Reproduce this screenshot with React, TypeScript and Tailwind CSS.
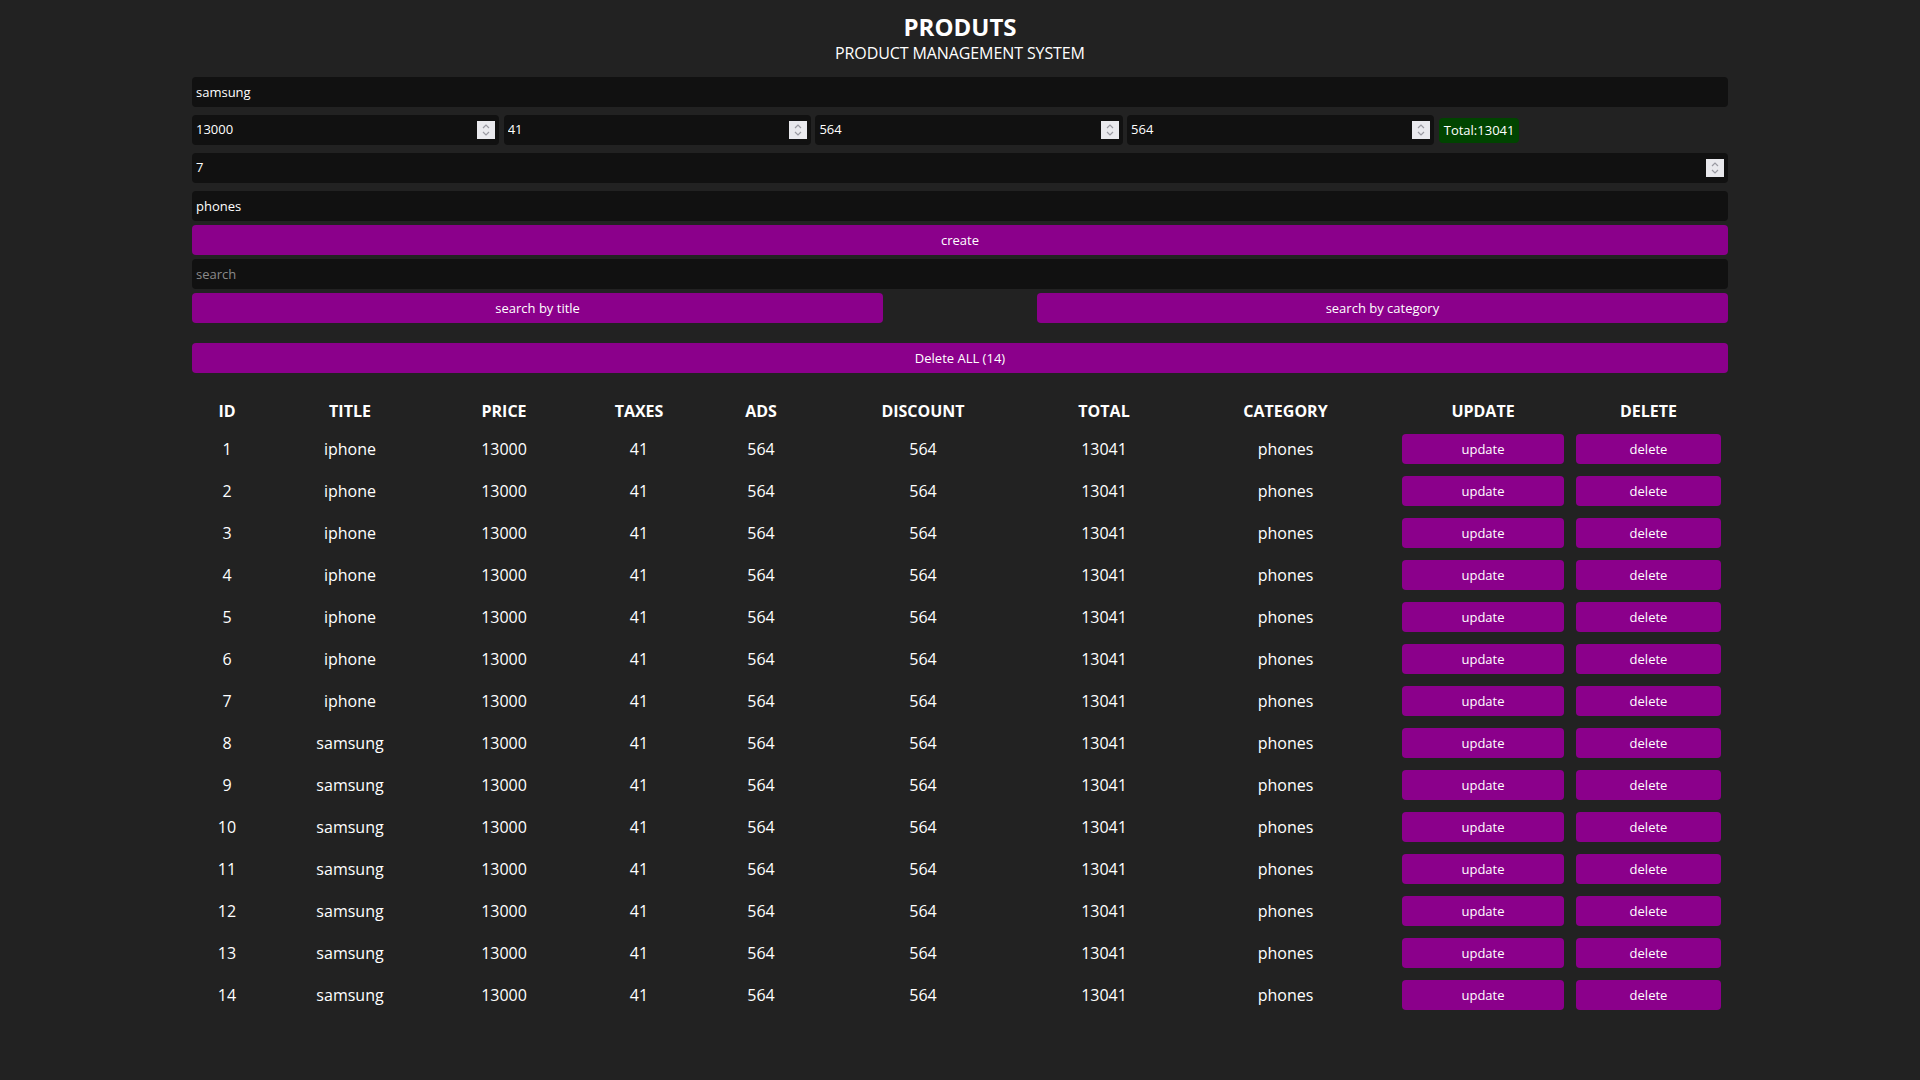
import React from 'react';

const font = "font-['Open_Sans','Noto_Sans',sans-serif]";

interface Product {
  id: number;
  title: string;
  price: number;
  taxes: number;
  ads: number;
  discount: number;
  total: number;
  category: string;
}

const products: Product[] = Array.from({ length: 14 }, (_, i) => ({
  id: i + 1,
  title: i < 7 ? 'iphone' : 'samsung',
  price: 13000,
  taxes: 41,
  ads: 564,
  discount: 564,
  total: 13041,
  category: 'phones',
}));

const columns = [
  { label: 'id', w: 'w-[66px]' },
  { label: 'title', w: 'w-[176px]' },
  { label: 'price', w: 'w-[128px]' },
  { label: 'taxes', w: 'w-[138px]' },
  { label: 'ads', w: 'w-[102px]' },
  { label: 'discount', w: 'w-[218px]' },
  { label: 'total', w: 'w-[140px]' },
  { label: 'category', w: 'w-[219px]' },
  { label: 'update', w: 'w-[172px]' },
  { label: 'delete', w: 'w-[155px]' },
];

const Spinner = () => (
  <div className="w-[18px] h-[18px] bg-[#e9e9ed] flex items-center justify-center shrink-0">
    <svg width="10" height="14" viewBox="0 0 10 14" fill="none" stroke="#9a9aa2" strokeWidth="1.2">
      <path d="M2 5 L5 2 L8 5" />
      <path d="M2 9 L5 12 L8 9" />
    </svg>
  </div>
);

const NumberField: React.FC<{ value: string; className?: string }> = ({ value, className }) => (
  <div className={`h-[30px] bg-[#111] rounded-[4px] flex items-center pl-[4px] pr-[4px] ${className ?? ''}`}>
    <input
      type="text"
      defaultValue={value}
      className="flex-1 min-w-0 bg-transparent outline-none text-white text-[13px]"
    />
    <Spinner />
  </div>
);

const TextField: React.FC<{ value?: string; placeholder?: string; className?: string }> = ({ value, placeholder, className }) => (
  <input
    type="text"
    defaultValue={value}
    placeholder={placeholder}
    className={`block w-full h-[30px] bg-[#111] rounded-[4px] px-[4px] outline-none text-white text-[13px] placeholder:text-[#8a8a8a] ${className ?? ''}`}
  />
);

const PurpleButton: React.FC<{ children: React.ReactNode; className?: string }> = ({ children, className }) => (
  <button className={`h-[30px] bg-[#8b008b] text-white text-[13px] leading-[30px] rounded-[4px] cursor-pointer ${className ?? ''}`}>
    {children}
  </button>
);

export default function App() {
  return (
    <div className={`min-h-screen bg-[#222] text-white ${font}`}>
      <div className="w-[80%] mx-auto pb-[40px]">
        <div className="text-center pt-[12px]">
          <h2 className="text-[24px] leading-[30px] font-bold">PRODUTS</h2>
          <p className="text-[16px] leading-[22px] tracking-[-0.1px]">PRODUCT MANAGEMENT SYSTEM</p>
        </div>

        <div className="flex flex-col">
          <TextField value="samsung" className="mt-[13px]" />
          <div className="flex items-center gap-[4.5px] mt-[8px]">
            <NumberField value="13000" className="w-[20%]" />
            <NumberField value="41" className="w-[20%]" />
            <NumberField value="564" className="w-[20%]" />
            <NumberField value="564" className="w-[20%]" />
            <small className="bg-[#004400] text-white text-[13px] h-[25px] leading-[25px] px-[5px] rounded-[4px]">
              Total:13041
            </small>
          </div>
          <NumberField value="7" className="w-full mt-[8px]" />
          <TextField value="phones" className="mt-[8px]" />
          <PurpleButton className="w-full mt-[4px]">create</PurpleButton>
          <TextField placeholder="search" className="mt-[4px]" />
          <div className="flex justify-between mt-[4px]">
            <PurpleButton className="w-[45%]">search by title</PurpleButton>
            <PurpleButton className="w-[45%]">search by category</PurpleButton>
          </div>
          <PurpleButton className="w-full mt-[20px]">Delete ALL (14)</PurpleButton>
        </div>

        <table className="w-full table-fixed border-separate border-spacing-[2px] text-center mt-[20px]">
          <thead>
            <tr>
              {columns.map((c) => (
                <th key={c.label} className={`${c.w} py-[5px] px-[5px] text-[16px] leading-[22px] font-bold uppercase`}>
                  {c.label}
                </th>
              ))}
            </tr>
          </thead>
          <tbody>
            {products.map((p) => (
              <tr key={p.id} className="text-[16px]">
                <td className="p-[5px] h-[40px]">{p.id}</td>
                <td className="p-[5px]">{p.title}</td>
                <td className="p-[5px]">{p.price}</td>
                <td className="p-[5px]">{p.taxes}</td>
                <td className="p-[5px]">{p.ads}</td>
                <td className="p-[5px]">{p.discount}</td>
                <td className="p-[5px]">{p.total}</td>
                <td className="p-[5px]">{p.category}</td>
                <td className="p-[5px]">
                  <PurpleButton className="w-full block">update</PurpleButton>
                </td>
                <td className="p-[5px]">
                  <PurpleButton className="w-full block">delete</PurpleButton>
                </td>
              </tr>
            ))}
          </tbody>
        </table>
      </div>
    </div>
  );
}
